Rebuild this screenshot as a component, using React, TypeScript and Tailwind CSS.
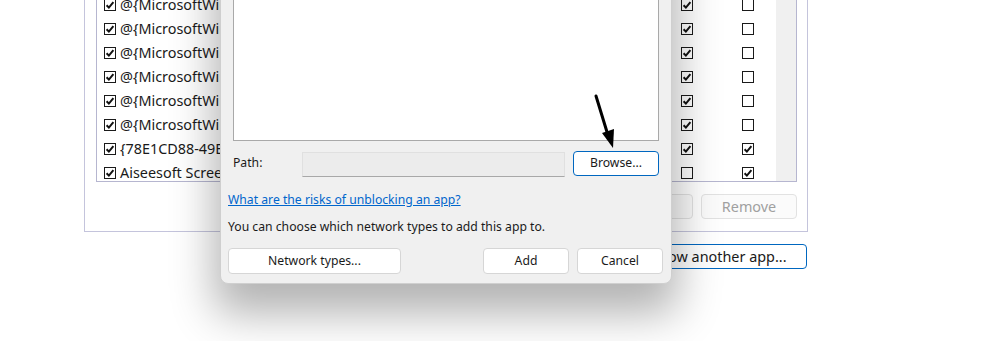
import React from 'react';

const rows = [
  { name: '@{MicrosoftWindows.Client.WebExperience}', a: true, b: false },
  { name: '@{MicrosoftWindows.Client.WebExperience}', a: true, b: false },
  { name: '@{MicrosoftWindows.Client.WebExperience}', a: true, b: false },
  { name: '@{MicrosoftWindows.Client.WebExperience}', a: true, b: false },
  { name: '@{MicrosoftWindows.Client.WebExperience}', a: true, b: false },
  { name: '@{MicrosoftWindows.Client.WebExperience}', a: true, b: false },
  { name: '{78E1CD88-49E3-476E-B926-580E596AD309}', a: true, b: true },
  { name: 'Aiseesoft Screen Recorder', a: false, b: true },
];

const Check = ({ checked }: { checked: boolean }) => (
  <svg width="12" height="12" viewBox="0 0 12 12" className="shrink-0">
    <rect x="0.5" y="0.5" width="11" height="11" fill="#fff" stroke="#1a1a1a" />
    {checked && <path d="M2.6 6.2 L4.9 8.6 L9.4 3.2" fill="none" stroke="#111" strokeWidth="2" />}
  </svg>
);

export default function App() {
  return (
    <div className="relative w-[984px] h-[341px] overflow-hidden bg-white font-['Noto_Sans',sans-serif] text-[#1a1a1a]">
      {/* background window */}
      <div className="ml-[84px] w-[724px]">
        <div className="h-[232px] border-x border-b border-[#c4c4dc] flex flex-col">
          <div className="ml-[11px] mr-[10px] h-[182px] border-x border-b border-[#b6b6d0] overflow-hidden flex">
            <div className="flex-1 -mt-[7px]">
              {rows.map((r, i) => (
                <div key={i} className="h-6 flex items-center text-[14.4px] leading-none">
                  <div className="w-[577px] flex items-center pl-[7px] gap-[4px] overflow-hidden whitespace-nowrap">
                    <Check checked={true} />
                    <span>{r.name}</span>
                  </div>
                  <div className="w-[7px]" />
                  <Check checked={r.a} />
                  <div className="w-[49px]" />
                  <Check checked={r.b} />
                </div>
              ))}
            </div>
            <div className="w-[20px] bg-[#f0f0f0]" />
          </div>
          <div className="mt-[12px] mr-[10px] flex justify-end gap-[8px] text-[14.4px]">
            <div className="w-[110px] h-[25px] rounded-[4px] border border-[#e2e2e2] bg-[#fbfbfb] flex items-center justify-center text-[#a0a0a0]">
              Details...
            </div>
            <div className="w-[96px] h-[25px] rounded-[4px] border border-[#e2e2e2] bg-[#fbfbfb] flex items-center justify-center text-[#a0a0a0]">
              Remove
            </div>
          </div>
        </div>
        <div className="mt-[12px] flex justify-end pr-[1px] text-[14.4px]">
          <div className="w-[176px] h-[25px] rounded-[4px] border border-[#0067c0] bg-white flex items-center justify-center">
            Allow another app...
          </div>
        </div>
      </div>

      {/* Add an app dialog */}
      <div className="absolute left-[220px] top-[-120px] w-[452px] h-[404px] rounded-[8px] border border-[#cfcfcf] bg-[#f0f0f0] shadow-[0_24px_44px_6px_rgba(0,0,0,0.3)] flex flex-col px-[11px] pb-[9px] text-[12.2px]">
        <div className="flex-1 ml-[1px] mr-[1px] bg-white border border-[#a9a9a9]" />
        <div className="mt-[9px] h-[26px] flex items-center">
          <span className="w-[70px] pl-[1px]">Path:</span>
          <div className="w-[263px] h-[25px] mt-[2px] bg-[#ececec] border border-[#e0e0e0] border-b-[#a8a8a8]" />
          <div className="ml-[8px] w-[86px] h-[25px] rounded-[4px] border border-[#0067c0] bg-white flex items-center justify-center">
            Browse...
          </div>
        </div>
        <div className="mt-[16px] h-4 flex items-center -ml-[4px]">
          <span className="text-[#0066cc] underline">What are the risks of unblocking an app?</span>
        </div>
        <div className="mt-[11px] h-4 flex items-center -ml-[4px]">
          You can choose which network types to add this app to.
        </div>
        <div className="mt-[13px] flex items-center -ml-[4px] -mr-[3px]">
          <div className="w-[173px] h-[26px] rounded-[4px] border border-[#d6d6d6] bg-white flex items-center justify-center">
            Network types...
          </div>
          <div className="flex-1" />
          <div className="w-[86px] h-[26px] rounded-[4px] border border-[#d6d6d6] bg-white flex items-center justify-center">
            Add
          </div>
          <div className="ml-[8px] w-[86px] h-[26px] rounded-[4px] border border-[#d6d6d6] bg-white flex items-center justify-center">
            Cancel
          </div>
        </div>
      </div>

      {/* pointer arrow */}
      <svg className="absolute left-[590px] top-[90px]" width="32" height="64" viewBox="0 0 32 64">
        <line x1="6" y1="6" x2="17" y2="42" stroke="#000" strokeWidth="3" strokeLinecap="round" />
        <polygon points="23,58 12,43 24,39" fill="#000" />
      </svg>
    </div>
  );
}
